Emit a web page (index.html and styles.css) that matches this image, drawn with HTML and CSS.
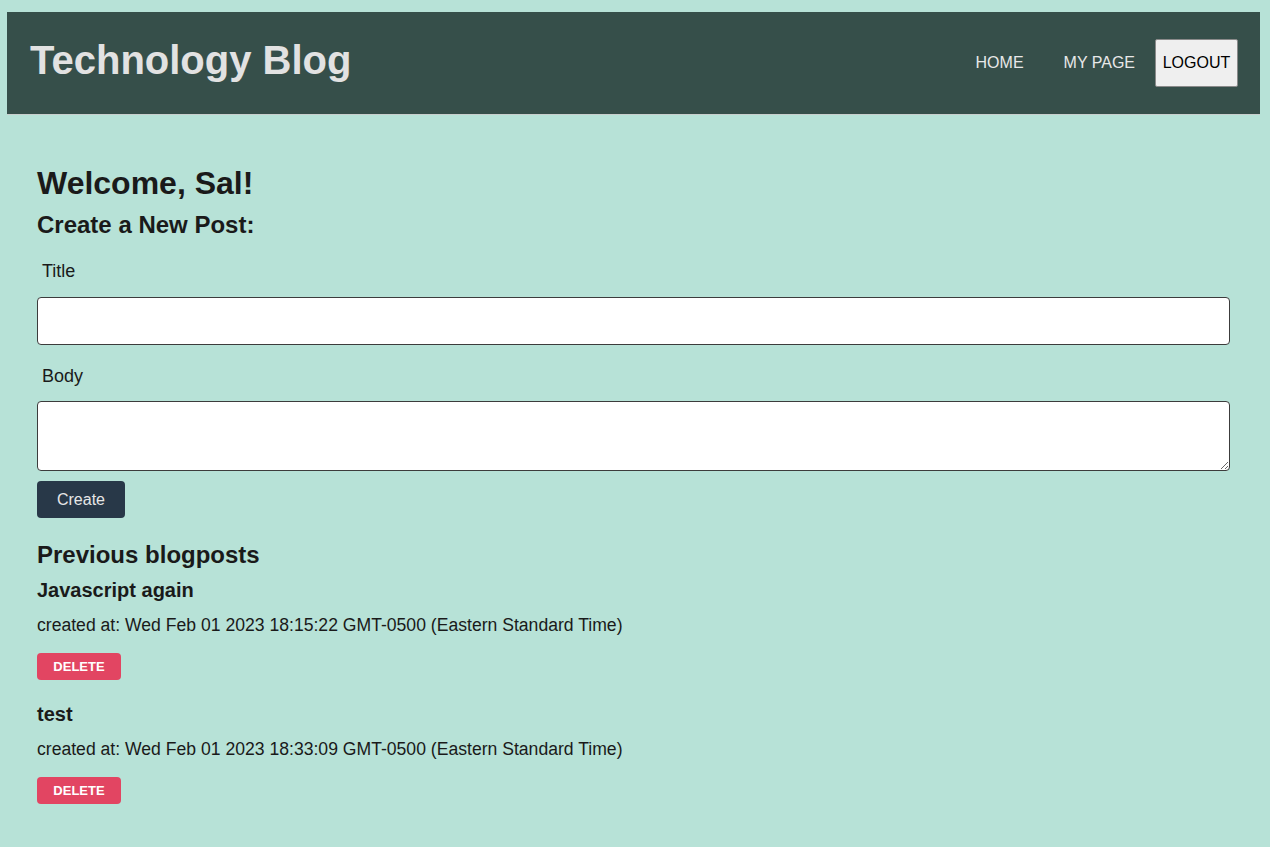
FILE: index.html
```html
<!DOCTYPE html>
<html lang="en">
<head>
<meta charset="utf-8">
<title>Technology Blog</title>
<link rel="stylesheet" href="styles.css">
</head>
<body>
<header class="site-header">
  <div class="brand">Technology Blog</div>
  <nav class="nav">
    <a class="nav-link" href="#">HOME</a>
    <a class="nav-link" href="#">MY PAGE</a>
    <button class="logout" type="button">LOGOUT</button>
  </nav>
</header>
<main class="content">
  <h1 class="welcome">Welcome, Sal!</h1>
  <h2 class="section-title">Create a New Post:</h2>
  <form class="post-form">
    <label class="field-label" for="title">Title</label>
    <input class="field-input" id="title" type="text">
    <label class="field-label field-label--body" for="body">Body</label>
    <textarea class="field-textarea" id="body"></textarea>
    <button class="create-btn" type="button">Create</button>
  </form>
  <h2 class="section-title section-title--prev">Previous blogposts</h2>
  <article class="post">
    <h3 class="post-title">Javascript again</h3>
    <p class="post-date">created at: Wed Feb 01 2023 18:15:22 GMT-0500 (Eastern Standard Time)</p>
    <button class="delete-btn" type="button">DELETE</button>
  </article>
  <article class="post">
    <h3 class="post-title">test</h3>
    <p class="post-date">created at: Wed Feb 01 2023 18:33:09 GMT-0500 (Eastern Standard Time)</p>
    <button class="delete-btn" type="button">DELETE</button>
  </article>
</main>
</body>
</html>
```
FILE: styles.css
```css
* { box-sizing: border-box; }
html, body {
  margin: 0;
  background: #b7e2d7;
}
body {
  padding: 12px 10px 0 7px;
  font-family: "Liberation Sans", Arial, Helvetica, sans-serif;
  color: #1a1a1a;
  min-height: 847px;
}
.site-header {
  height: 103px;
  background: #364f4a;
  border-bottom: 1px solid #c9cfcd;
  display: flex;
  align-items: center;
  justify-content: space-between;
  padding: 0 22px 0 23px;
}
.brand {
  color: #e2e2e2;
  font-weight: bold;
  font-size: 40px;
  line-height: 46px;
  margin-top: -6px;
}
.nav {
  display: flex;
  align-items: center;
  margin-top: -1px;
}
.nav-link {
  color: #e8e8e8;
  text-decoration: none;
  font-size: 16px;
  margin-right: 40px;
}
.nav-link:nth-child(2) { margin-right: 20px; }
.logout {
  font-family: inherit;
  font-size: 16px;
  color: #000;
  background: #efefef;
  border: 1px solid #8a8a8a;
  border-radius: 2px;
  width: 83px;
  height: 48px;
  padding: 0;
}
.content {
  padding: 50px 30px 40px;
}
.welcome {
  margin: 0;
  font-size: 32px;
  line-height: 37px;
}
.section-title {
  margin: 9px 0 0;
  font-size: 24px;
  line-height: 28px;
}
.post-form {
  display: flex;
  flex-direction: column;
  align-items: flex-start;
}
.field-label {
  font-size: 18px;
  line-height: 21px;
  margin: 22px 0 0 5px;
}
.field-label--body { margin-top: 21px; }
.field-input {
  margin-top: 15px;
  width: 100%;
  height: 48px;
  border: 1px solid #3c3c3c;
  border-radius: 4px;
  background: #fff;
}
.field-textarea {
  margin-top: 14px;
  width: 100%;
  height: 70px;
  border: 1px solid #3c3c3c;
  border-radius: 4px;
  background: #fff;
  resize: vertical;
  display: block;
}
.create-btn {
  margin-top: 10px;
  width: 88px;
  height: 37px;
  background: #283848;
  color: #e6e6e6;
  border: none;
  border-radius: 4px;
  font-family: inherit;
  font-size: 16px;
}
.section-title--prev {
  margin-top: 23px;
}
.post-title {
  margin: 10px 0 0;
  font-size: 20px;
  line-height: 23px;
}
.post-date {
  margin: 13px 0 0;
  font-size: 17.6px;
  line-height: 20px;
}
.delete-btn {
  margin-top: 18px;
  width: 84px;
  height: 27px;
  background: #e24562;
  color: #fff;
  border: none;
  border-radius: 4px;
  font-family: inherit;
  font-weight: bold;
  font-size: 13px;
  padding: 0;
  display: block;
}
.post + .post .post-title { margin-top: 23px; }
```
